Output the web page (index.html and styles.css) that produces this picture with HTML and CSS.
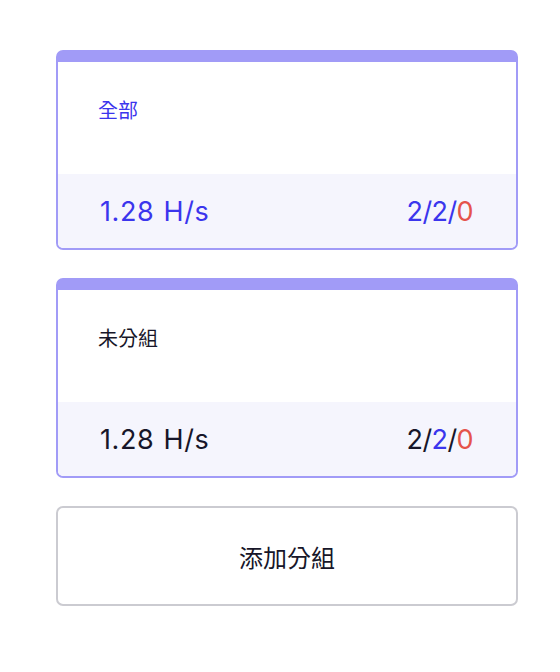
FILE: index.html
```html
<!DOCTYPE html>
<html lang="zh-Hant">
<head>
<meta charset="utf-8">
<link rel="stylesheet" href="styles.css">
</head>
<body>
<div class="list">
  <div class="card active">
    <div class="card-body"><span class="label">全部</span></div>
    <div class="card-foot">
      <span class="rate">1.28 H/s</span>
      <span class="count"><span>2</span>/<span>2</span>/<span class="red">0</span></span>
    </div>
  </div>
  <div class="card">
    <div class="card-body"><span class="label">未分組</span></div>
    <div class="card-foot">
      <span class="rate">1.28 H/s</span>
      <span class="count"><span>2</span>/<span class="blue">2</span>/<span class="red">0</span></span>
    </div>
  </div>
  <button class="add">添加分組</button>
</div>
</body>
</html>
```
FILE: styles.css
```css
html, body {
  margin: 0;
  padding: 0;
  background: #ffffff;
  font-family: Inter, "Noto Sans CJK TC", sans-serif;
}
.list {
  padding: 50px 42px 0 56px;
  display: flex;
  flex-direction: column;
  gap: 28px;
}
.card {
  border: 2px solid #a19bf7;
  border-top-width: 12px;
  border-radius: 7px;
  overflow: hidden;
  color: #171629;
}
.card-body {
  height: 112px;
  box-sizing: border-box;
  padding: 34px 40px 0;
  background: #ffffff;
}
.label {
  font-size: 20px;
  line-height: 28px;
  font-family: "Noto Sans CJK TC", sans-serif;
}
.card-foot {
  height: 74px;
  box-sizing: border-box;
  background: #f5f5fd;
  display: flex;
  align-items: center;
  justify-content: space-between;
  padding: 1px 43px 0 42px;
  font-size: 27px;
}
.rate {
  letter-spacing: 0.6px;
  word-spacing: 1px;
}
.count {
  letter-spacing: -0.6px;
}
.active .label,
.active .card-foot {
  color: #3b35ed;
}
.blue { color: #3b35ed; }
.red { color: #e5534b; }
.add {
  height: 100px;
  border: 2px solid #cbcbd1;
  border-radius: 7px;
  background: #ffffff;
  font-family: "Noto Sans CJK TC", sans-serif;
  font-size: 24px;
  color: #171629;
  padding: 0;
}
```
